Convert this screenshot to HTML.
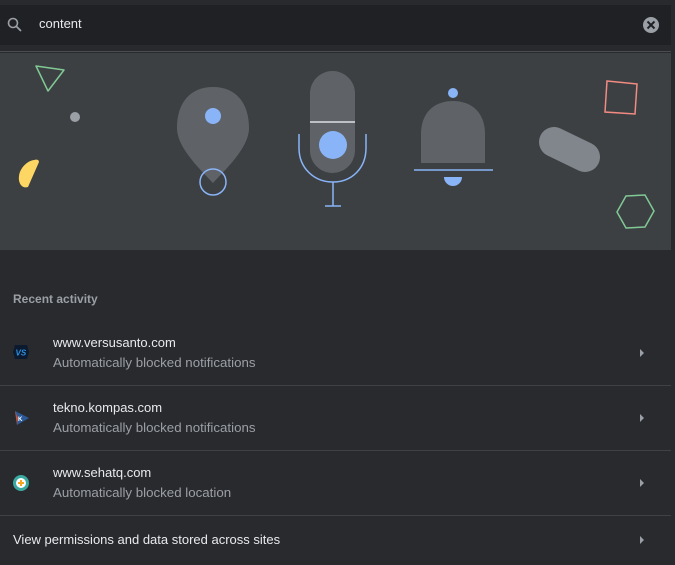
<!DOCTYPE html>
<html><head><style>
body{margin:0;width:675px;height:565px;background:#292a2d;font-family:"Liberation Sans",sans-serif;overflow:hidden;position:relative}
.search{position:absolute;left:0;top:5px;width:671px;height:40px;background:#202124}
.search span{position:absolute;left:39px;top:11px;color:#e8eaed;font-size:13px}
.hr{position:absolute;left:0;width:671px;height:1px;background:#3f4144}
.banner{position:absolute;left:0;top:53px;width:671px;height:197px;background:#3c4043}
.t{position:absolute;left:53px;color:#e8eaed;font-size:13px}
.s{position:absolute;left:53px;color:#9aa0a6;font-size:13.3px}
.ch{position:absolute;left:640px;width:0;height:0;border-left:4px solid #9aa0a6;border-top:4px solid transparent;border-bottom:4px solid transparent}
</style></head><body>
<div class="search">
<svg style="position:absolute;left:6px;top:11px" width="18" height="18"><circle cx="7" cy="7" r="4.5" stroke="#9aa0a6" stroke-width="1.6" fill="none"/><line x1="10.5" y1="10.5" x2="15" y2="15" stroke="#9aa0a6" stroke-width="1.8"/></svg>
<span>content</span>
<svg style="position:absolute;left:642px;top:11px" width="18" height="18"><circle cx="9" cy="9" r="8" fill="#9aa0a6"/><path d="M5.5 5.5L12.5 12.5M12.5 5.5L5.5 12.5" stroke="#202124" stroke-width="2"/></svg>
</div>
<div class="hr" style="top:51px;background:#4a4c50"></div>
<div class="banner">
<svg width="671" height="197" viewBox="0 53 671 197" style="position:absolute;left:0;top:0">
<path d="M36 66L64 70L48 91Z" fill="none" stroke="#81c995" stroke-width="1.5" stroke-linejoin="round"/>
<circle cx="75" cy="117" r="5" fill="#9aa0a6"/>
<path d="M39 162L28 187C22 189 18 183 19 176C20 168 27 161 34 160C37 159 39 160 39 162Z" fill="#fdd663"/>
<path d="M213 87C236 87 249 103 249 128C249 148 225 170 213 183C201 170 177 148 177 128C177 103 190 87 213 87Z" fill="#5f6368"/>
<circle cx="213" cy="116" r="8" fill="#8ab4f8"/>
<circle cx="213" cy="182" r="13" fill="none" stroke="#8ab4f8" stroke-width="1.5"/>
<rect x="310" y="71" width="45" height="102" rx="22.5" fill="#5f6368"/>
<line x1="310" y1="122" x2="355" y2="122" stroke="#bdc1c6" stroke-width="2"/>
<circle cx="333" cy="145" r="14" fill="#8ab4f8"/>
<path d="M299 134V148C299 168 314 182 333 182C352 182 366 168 366 148V134" fill="none" stroke="#8ab4f8" stroke-width="1.5"/>
<line x1="333" y1="182" x2="333" y2="206" stroke="#8ab4f8" stroke-width="1.5"/><line x1="325" y1="206" x2="341" y2="206" stroke="#8ab4f8" stroke-width="1.5"/>
<circle cx="453" cy="93" r="5" fill="#8ab4f8"/>
<path d="M421 163V134C421 112 435 101 453 101C471 101 485 112 485 134V163Z" fill="#5f6368"/>
<line x1="414" y1="170" x2="493" y2="170" stroke="#8ab4f8" stroke-width="1.5"/>
<path d="M444 177H462A9 9 0 0 1 444 177Z" fill="#8ab4f8"/>
<line x1="554" y1="142" x2="585" y2="157" stroke="#80868b" stroke-width="30" stroke-linecap="round"/>
<path d="M607 81L637 84L635 114L605 112Z" fill="none" stroke="#f28b82" stroke-width="1.5"/>
<path d="M626 196L645 195L654 211L645 227L626 228L617 212Z" fill="none" stroke="#81c995" stroke-width="1.5"/>
</svg>
</div>
<div style="position:absolute;left:13px;top:292px;color:#9aa0a6;font-size:12px;font-weight:bold">Recent activity</div>
<svg style="position:absolute;left:12px;top:344px" width="18" height="16"><path d="M3 1H15L17 8L15 15H3L1 8Z" fill="#0b1a2e"/><text x="3.5" y="11.5" font-size="8" font-weight="bold" font-style="italic" fill="#2f8fe0" font-family="Liberation Sans">VS</text></svg>
<div class="t" style="top:335px">www.versusanto.com</div><div class="s" style="top:355px">Automatically blocked notifications</div><div class="ch" style="top:349px"></div>
<div class="hr" style="top:385px"></div>
<svg style="position:absolute;left:12px;top:409px" width="18" height="18"><path d="M3 2L17 9L5 16Z" fill="#2b5a9a"/><path d="M3 2L6 9L5 16Z" fill="#c2553a"/><text x="6" y="12" font-size="6" fill="#fff" font-weight="bold" font-family="Liberation Sans">K</text></svg>
<div class="t" style="top:400px">tekno.kompas.com</div><div class="s" style="top:420px">Automatically blocked notifications</div><div class="ch" style="top:414px"></div>
<div class="hr" style="top:450px"></div>
<svg style="position:absolute;left:12px;top:474px" width="18" height="18"><circle cx="9" cy="9" r="8" fill="#3aa9a0"/><circle cx="9" cy="9" r="5" fill="#fff"/><path d="M9 6V12M6 9H12" stroke="#f5a623" stroke-width="2"/></svg>
<div class="t" style="top:465px">www.sehatq.com</div><div class="s" style="top:485px">Automatically blocked location</div><div class="ch" style="top:479px"></div>
<div class="hr" style="top:515px"></div>
<div class="t" style="top:532px;left:13px">View permissions and data stored across sites</div><div class="ch" style="top:536px"></div>
</body></html>
